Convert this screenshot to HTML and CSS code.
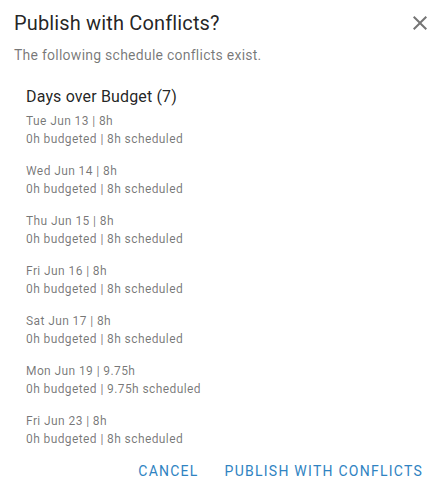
FILE: index.html
```html
<!DOCTYPE html>
<html lang="en">
<head>
<meta charset="UTF-8">
<meta name="viewport" content="width=device-width, initial-scale=1.0">
<title>Publish with Conflicts?</title>
<link rel="stylesheet" href="styles.css">
</head>
<body>
<div class="dialog">
  <div class="dialog-header">
    <h2 class="dialog-title">Publish with Conflicts?</h2>
    <button class="close-button" aria-label="Close">
      <svg width="24" height="24" viewBox="0 0 24 24"><path d="M19 6.41 17.59 5 12 10.59 6.41 5 5 6.41 10.59 12 5 17.59 6.41 19 12 13.41 17.59 19 19 17.59 13.41 12z" fill="currentColor"/></svg>
    </button>
  </div>
  <p class="dialog-subtitle">The following schedule conflicts exist.</p>
  <div class="conflict-list">
    <h3 class="conflict-heading">Days over Budget (7)</h3>
    <div class="conflict">
      <div>Tue Jun 13 | 8h</div>
      <div>0h budgeted | 8h scheduled</div>
    </div>
    <div class="conflict">
      <div>Wed Jun 14 | 8h</div>
      <div>0h budgeted | 8h scheduled</div>
    </div>
    <div class="conflict">
      <div>Thu Jun 15 | 8h</div>
      <div>0h budgeted | 8h scheduled</div>
    </div>
    <div class="conflict">
      <div>Fri Jun 16 | 8h</div>
      <div>0h budgeted | 8h scheduled</div>
    </div>
    <div class="conflict">
      <div>Sat Jun 17 | 8h</div>
      <div>0h budgeted | 8h scheduled</div>
    </div>
    <div class="conflict">
      <div>Mon Jun 19 | 9.75h</div>
      <div>0h budgeted | 9.75h scheduled</div>
    </div>
    <div class="conflict">
      <div>Fri Jun 23 | 8h</div>
      <div>0h budgeted | 8h scheduled</div>
    </div>
  </div>
  <div class="dialog-actions">
    <button class="text-button">Cancel</button>
    <button class="text-button">Publish with Conflicts</button>
  </div>
</div>
</body>
</html>
```

FILE: styles.css
```css
/* styles.css */
body {
  margin: 0;
  background-color: #fff;
  font-family: Roboto, "Liberation Sans", sans-serif;
  color: rgba(0, 0, 0, 0.87);
}

.dialog {
  width: 444px;
  height: 493px;
  box-sizing: border-box;
  display: flex;
  flex-direction: column;
}

.dialog-header {
  display: flex;
  align-items: center;
  justify-content: space-between;
  padding: 7px 12px 0 14px;
}

.dialog-title {
  margin: 0;
  font-size: 20px;
  font-weight: 400;
  line-height: 32px;
  letter-spacing: 0.15px;
}

.close-button {
  width: 24px;
  height: 24px;
  padding: 0;
  border: none;
  background: none;
  color: #757575;
  cursor: pointer;
  display: flex;
}

.dialog-subtitle {
  margin: 6px 0 0 14px;
  font-size: 14px;
  line-height: 20px;
  letter-spacing: 0.25px;
  color: rgba(0, 0, 0, 0.54);
}

.conflict-list {
  padding: 20px 0 0 26px;
}

.conflict-heading {
  margin: 0 0 4px 0;
  font-size: 16px;
  font-weight: 400;
  line-height: 24px;
  letter-spacing: 0.15px;
}

.conflict {
  font-size: 12px;
  line-height: 17.5px;
  letter-spacing: 0.4px;
  color: rgba(0, 0, 0, 0.54);
  margin-bottom: 15px;
}

.conflict:last-child {
  margin-bottom: 0;
}

.dialog-actions {
  display: flex;
  justify-content: flex-end;
  gap: 10px;
  padding: 0 13px 0 0;
  margin-top: auto;
  margin-bottom: 4px;
}

.text-button {
  border: none;
  background: none;
  padding: 6px 8px;
  font-family: Roboto, "Liberation Sans", sans-serif;
  font-size: 14px;
  font-weight: 400;
  line-height: 24px;
  letter-spacing: 1.25px;
  text-transform: uppercase;
  color: #2f83c2;
  cursor: pointer;
}
```
